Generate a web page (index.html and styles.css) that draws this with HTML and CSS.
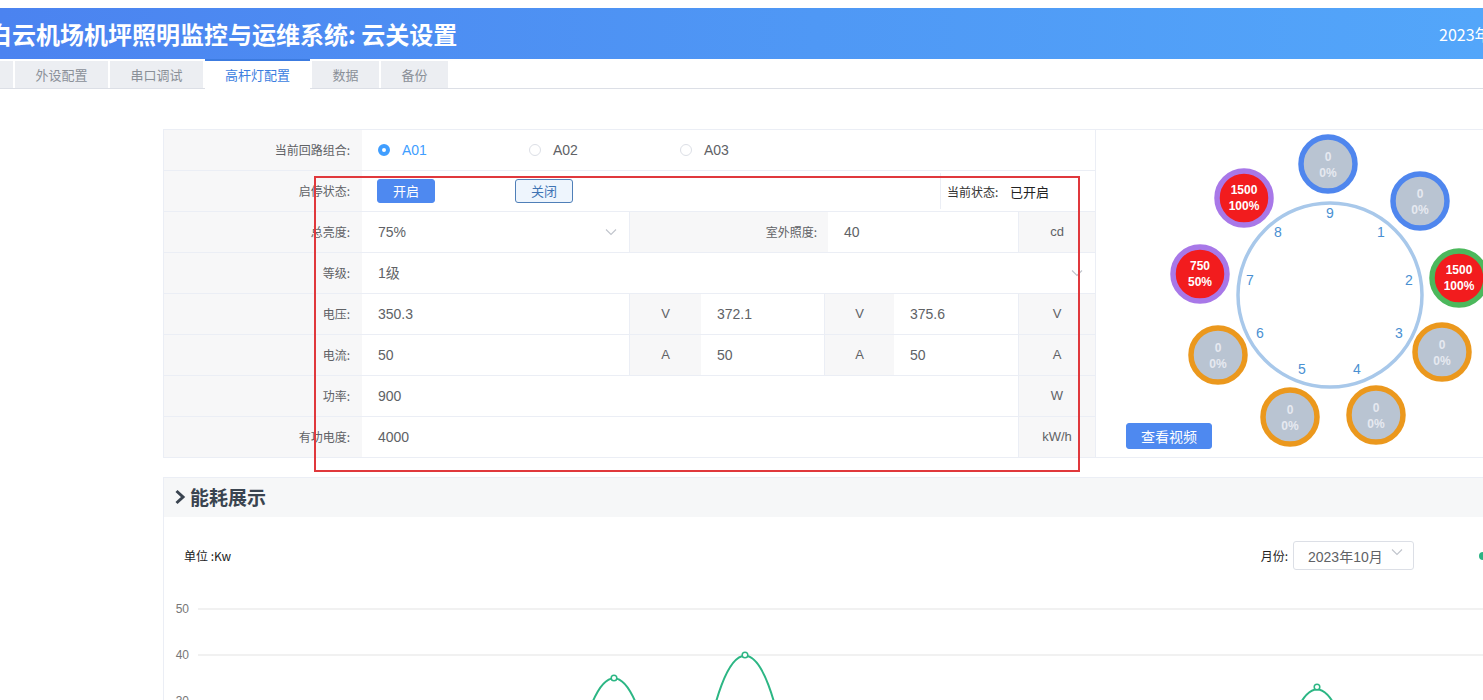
FILE: index.html
```html
<!DOCTYPE html>
<html lang="zh-CN">
<head>
<meta charset="utf-8">
<title>云关设置</title>
<link rel="stylesheet" href="styles.css">
</head>
<body>
<div class="topgap"></div>
<header class="header">
  <h1 class="title">白云机场机坪照明监控与运维系统: 云关设置</h1>
  <div class="clock">2023年10月26日 10:24:18</div>
</header>
<nav class="tabs">
  <div class="tab tab-cut">基本配置</div>
  <div class="tab">外设配置</div>
  <div class="tab">串口调试</div>
  <div class="tab active">高杆灯配置</div>
  <div class="tab tab-sm">数据</div>
  <div class="tab tab-sm">备份</div>
</nav>

<main class="main">
  <section class="config">
    <div class="table">
      <div class="row">
        <div class="lbl">当前回路组合:</div>
        <div class="cell radios">
          <label class="radio on"><span class="dot"></span>A01</label>
          <label class="radio"><span class="dot"></span>A02</label>
          <label class="radio"><span class="dot"></span>A03</label>
        </div>
      </div>
      <div class="row">
        <div class="lbl">启停状态:</div>
        <div class="cell btns">
          <button class="btn primary">开启</button>
          <button class="btn plain">关闭</button>
        </div>
        <div class="status"><span class="st-lbl">当前状态:</span><span class="st-val">已开启</span></div>
      </div>
      <div class="row">
        <div class="lbl">总亮度:</div>
        <div class="cell sel w267">75%<svg class="chev" viewBox="0 0 12 8"><polyline points="1,1.5 6,6.5 11,1.5"/></svg></div>
        <div class="lbl w199">室外照度:</div>
        <div class="cell w190">40</div>
        <div class="unit w77">cd</div>
      </div>
      <div class="row">
        <div class="lbl">等级:</div>
        <div class="cell sel grow">1级<svg class="chev" viewBox="0 0 12 8"><polyline points="1,1.5 6,6.5 11,1.5"/></svg></div>
      </div>
      <div class="row">
        <div class="lbl">电压:</div>
        <div class="cell w267">350.3</div>
        <div class="unit w72">V</div>
        <div class="cell w123">372.1</div>
        <div class="unit w70">V</div>
        <div class="cell w124">375.6</div>
        <div class="unit w77">V</div>
      </div>
      <div class="row">
        <div class="lbl">电流:</div>
        <div class="cell w267">50</div>
        <div class="unit w72">A</div>
        <div class="cell w123">50</div>
        <div class="unit w70">A</div>
        <div class="cell w124">50</div>
        <div class="unit w77">A</div>
      </div>
      <div class="row">
        <div class="lbl">功率:</div>
        <div class="cell w656">900</div>
        <div class="unit w77">W</div>
      </div>
      <div class="row">
        <div class="lbl">有功电度:</div>
        <div class="cell w656">4000</div>
        <div class="unit w77">kW/h</div>
      </div>
    </div>

    <div class="panel">
      <svg class="dial" viewBox="0 0 400 329" width="400" height="329">
        <circle cx="234" cy="165" r="92" class="ring"/>
        <g class="nums">
          <text x="234" y="83">9</text>
          <text x="285" y="102">1</text>
          <text x="313" y="150">2</text>
          <text x="303" y="203">3</text>
          <text x="261" y="239">4</text>
          <text x="206" y="239">5</text>
          <text x="164" y="203">6</text>
          <text x="154" y="150">7</text>
          <text x="182" y="102">8</text>
        </g>
        <g class="bub off blue"><circle cx="232" cy="34" r="27"/><text x="232" y="27">0</text><text x="232" y="43">0%</text></g>
        <g class="bub off blue"><circle cx="324" cy="71" r="27"/><text x="324" y="64">0</text><text x="324" y="80">0%</text></g>
        <g class="bub on green"><circle cx="363" cy="148" r="27"/><text x="363" y="140">1500</text><text x="363" y="156">100%</text></g>
        <g class="bub off orange"><circle cx="346" cy="222" r="27"/><text x="346" y="215">0</text><text x="346" y="231">0%</text></g>
        <g class="bub off orange"><circle cx="280" cy="285" r="27"/><text x="280" y="278">0</text><text x="280" y="294">0%</text></g>
        <g class="bub off orange"><circle cx="194" cy="287" r="27"/><text x="194" y="280">0</text><text x="194" y="296">0%</text></g>
        <g class="bub off orange"><circle cx="122" cy="225" r="27"/><text x="122" y="218">0</text><text x="122" y="234">0%</text></g>
        <g class="bub on purple"><circle cx="104" cy="144" r="27"/><text x="104" y="136">750</text><text x="104" y="152">50%</text></g>
        <g class="bub on purple"><circle cx="148" cy="68" r="27"/><text x="148" y="60">1500</text><text x="148" y="76">100%</text></g>
      </svg>
      <button class="btn primary video">查看视频</button>
    </div>
  </section>

  <section class="energy">
    <div class="energy-head"><svg class="arrow" viewBox="0 0 12 16"><polyline points="2.5,2 9,8 2.5,14"/></svg>能耗展示</div>
    <div class="toolbar">
      <span class="unit-note">单位 :Kw</span>
      <div class="right">
        <span class="month-lbl">月份:</span>
        <div class="month-sel">2023年10月<svg class="chev" viewBox="0 0 12 8"><polyline points="1,1.5 6,6.5 11,1.5"/></svg></div>
        <span class="legend-dot"></span>
      </div>
    </div>
    <svg class="chart" viewBox="0 0 1340 200" width="1340" height="200">
      <g class="axis">
        <text x="25" y="37">50</text>
        <text x="25" y="83">40</text>
        <text x="25" y="129">30</text>
      </g>
      <g class="grid">
        <line x1="34" y1="37" x2="1340" y2="37"/>
        <line x1="34" y1="83" x2="1340" y2="83"/>
        <line x1="34" y1="129" x2="1340" y2="129"/>
      </g>
      <path class="line" d="M410 200 C 432 75, 468 75, 490 200 M538 200 C 560 45, 602 45, 624 200 M1115 200 C 1136 90, 1170 90, 1191 200"/>
      <g class="mark">
        <circle cx="450" cy="106" r="2.8"/>
        <circle cx="581" cy="83" r="2.8"/>
        <circle cx="1153" cy="115" r="2.8"/>
      </g>
    </svg>
  </section>
</main>

<div class="annot"></div>
</body>
</html>
```

FILE: styles.css
```css
html, body {
  margin: 0;
  padding: 0;
  overflow: hidden;
  background: #fff;
  font-family: "Liberation Sans", "Noto Sans CJK SC", sans-serif;
  color: #606266;
}
.topgap { height: 8px; }
.header {
  height: 51px;
  display: flex;
  align-items: center;
  justify-content: space-between;
  background: linear-gradient(90deg, #4b83f0 0%, #4f98f5 55%, #53a6fa 100%);
  white-space: nowrap;
  overflow: hidden;
}
.title {
  margin: 0 0 0 -12px;
  font-size: 24px;
  font-weight: bold;
  color: #fff;
  font-family: "Noto Sans CJK SC", sans-serif;
  line-height: 51px;
}
.clock {
  flex: 0 0 auto;
  width: 44px;
  overflow: visible;
  color: #fff;
  font-size: 16px;
  font-family: "Noto Sans CJK SC", sans-serif;
  white-space: nowrap;
}
.tabs {
  display: flex;
  height: 29px;
  border-bottom: 1px solid #dcdfe6;
  white-space: nowrap;
}
.tab {
  margin-top: 2px;
  height: 27px;
  width: 93px;
  margin-right: 2px;
  background: #eceef2;
  color: #8a9098;
  font-size: 13px;
  line-height: 27px;
  text-align: center;
  font-family: "Noto Sans CJK SC", sans-serif;
  flex: 0 0 auto;
}
.tab-cut { margin-left: -80px; }
.tab-sm { width: 67px; }
.tab.active {
  width: 105px;
  margin-top: 0;
  height: 30px;
  background: #fff;
  border-top: 2px solid #3c7be0;
  box-sizing: border-box;
  line-height: 27px;
  color: #3b7de0;
}

.main {
  padding-left: 163px;
  padding-top: 40px;
  width: 1340px;
}
.config {
  display: flex;
  border-top: 1px solid #ebeef5;
  width: 1340px;
}
.table { width: 932px; flex: 0 0 932px; }
.row {
  display: flex;
  height: 41px;
  border-bottom: 1px solid #ebeef5;
  box-sizing: border-box;
}
.lbl {
  width: 199px;
  flex: 0 0 199px;
  box-sizing: border-box;
  background: #f7f7f8;
  border-left: 1px solid #ebeef5;
  font-size: 12px;
  color: #606266;
  text-align: right;
  padding-right: 12px;
  line-height: 40px;
  font-family: "Noto Sans CJK SC", sans-serif;
}
.lbl.w199 { padding-right: 11px; }
.cell {
  box-sizing: border-box;
  padding-left: 16px;
  font-size: 14px;
  line-height: 40px;
  color: #606266;
  background: #fff;
}
.unit {
  box-sizing: border-box;
  background: #f7f7f8;
  border-left: 1px solid #ebeef5;
  text-align: center;
  font-size: 13px;
  line-height: 40px;
  color: #606266;
}
.w267 { width: 267px; flex: 0 0 267px; }
.w72 { width: 72px; flex: 0 0 72px; }
.w123 { width: 123px; flex: 0 0 123px; }
.w70 { width: 70px; flex: 0 0 70px; }
.w124 { width: 124px; flex: 0 0 124px; }
.w77 { width: 77px; flex: 0 0 77px; }
.w190 { width: 190px; flex: 0 0 190px; }
.w656 { width: 656px; flex: 0 0 656px; }
.grow { flex: 1 1 auto; }
.sel {
  display: flex;
  align-items: center;
  justify-content: space-between;
  padding-right: 12px;
}
.chev {
  width: 12px;
  height: 8px;
  fill: none;
  stroke: #c0c4cc;
  stroke-width: 1.1;
}

.radios { display: flex; align-items: center; padding-left: 16px; flex: 1 1 auto; }
.radio {
  display: flex;
  align-items: center;
  font-size: 14px;
  color: #606266;
  width: 151px;
}
.radio .dot {
  width: 12px;
  height: 12px;
  border: 1px solid #dcdfe6;
  border-radius: 50%;
  margin-right: 12px;
  box-sizing: border-box;
  background: #fff;
}
.radio.on { color: #409eff; }
.radio.on .dot { border: 4px solid #409eff; }

.btns {
  display: flex;
  align-items: center;
  gap: 80px;
  padding-left: 15px;
  width: 578px;
  flex: 0 0 578px;
}
.btn {
  height: 24px;
  width: 58px;
  border-radius: 3px;
  font-size: 13px;
  font-family: "Noto Sans CJK SC", sans-serif;
  padding: 0;
  cursor: pointer;
  line-height: 22px;
}
.btn.primary { background: #4e89f0; border: 1px solid #4e89f0; color: #fff; }
.btn.plain { background: #eef5fd; border: 1px solid #4f7fb8; color: #3f74b4; }
.status {
  flex: 1 1 auto;
  display: flex;
  align-items: center;
  border-left: 1px solid #ebeef5;
  margin: 2px 0;
  padding-left: 6px;
  font-family: "Noto Sans CJK SC", sans-serif;
}
.st-lbl { font-size: 12px; color: #333; width: 63px; }
.st-val { font-size: 13px; color: #222; }

.panel {
  position: relative;
  width: 408px;
  flex: 0 0 408px;
  height: 328px;
  border-left: 1px solid #ebeef5;
  border-bottom: 1px solid #ebeef5;
  box-sizing: border-box;
}
.dial { display: block; }
.ring { fill: none; stroke: #a8c8ea; stroke-width: 3.5; }
.nums text {
  font-size: 14px;
  fill: #4a90d2;
  text-anchor: middle;
  dominant-baseline: central;
  font-family: "Liberation Sans", sans-serif;
}
.bub circle { stroke-width: 5.5; }
.bub text {
  font-size: 12px;
  font-weight: bold;
  text-anchor: middle;
  dominant-baseline: central;
  font-family: "Liberation Sans", sans-serif;
}
.bub.off circle { fill: #b9c4d2; }
.bub.off text { fill: #e6e9f0; }
.bub.on circle { fill: #f21c1e; }
.bub.on text { fill: #fff; }
.bub.blue circle { stroke: #4f86ee; }
.bub.green circle { stroke: #4cb85c; }
.bub.orange circle { stroke: #eb981d; }
.bub.purple circle { stroke: #a878e8; }
.video {
  position: absolute;
  left: 30px;
  top: 293px;
  width: 86px;
  height: 26px;
  font-size: 14px;
}

.energy {
  margin-top: 19px;
  width: 1340px;
  border: 1px solid #ebeef5;
  box-sizing: border-box;
}
.energy-head {
  height: 39px;
  background: #f6f7f8;
  display: flex;
  align-items: center;
  padding-left: 10px;
  padding-bottom: 2px;
  box-sizing: border-box;
  font-size: 19px;
  font-weight: bold;
  color: #3a4450;
  font-family: "Noto Sans CJK SC", sans-serif;
}
.arrow {
  width: 12px;
  height: 16px;
  fill: none;
  stroke: #3a4450;
  stroke-width: 3;
  margin-right: 4px;
}
.toolbar {
  display: flex;
  align-items: center;
  justify-content: space-between;
  padding: 24px 15px 0 20px;
  height: 29px;
}
.unit-note { font-size: 12px; color: #222; font-family: "Noto Sans CJK SC", sans-serif; }
.right { display: flex; align-items: center; }
.month-lbl { font-size: 12px; color: #222; margin-right: 5px; font-family: "Noto Sans CJK SC", sans-serif; }
.month-sel {
  width: 121px;
  height: 29px;
  box-sizing: border-box;
  border: 1px solid #dcdfe6;
  border-radius: 3px;
  display: flex;
  align-items: center;
  justify-content: space-between;
  padding: 0 10px 0 14px;
  font-size: 14px;
  color: #606266;
}
.month-sel .chev { margin-top: -8px; }
.legend-dot {
  width: 8px;
  height: 8px;
  border-radius: 50%;
  background: #2bb383;
  margin-left: 65px;
}
.chart { display: block; margin-top: 2px; }
.axis text {
  font-size: 12px;
  fill: #777;
  text-anchor: end;
  dominant-baseline: central;
  font-family: "Liberation Sans", sans-serif;
}
.grid line { stroke: #e3e3e3; stroke-width: 1; }
.line { fill: none; stroke: #2cb684; stroke-width: 2; }
.mark circle { fill: #fff; stroke: #2cb684; stroke-width: 1.5; }

.annot {
  position: absolute;
  left: 314px;
  top: 176px;
  width: 766px;
  height: 296px;
  border: 2px solid #e0383c;
  box-sizing: border-box;
  pointer-events: none;
}
```
